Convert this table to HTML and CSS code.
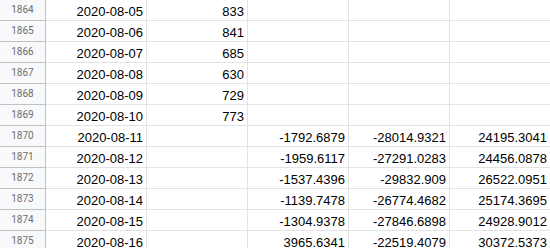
FILE: index.html
```html
<!DOCTYPE html>
<html lang="en">

<head>
    <meta charset="UTF-8">
    <meta name="viewport" content="width=device-width, initial-scale=1.0">
    <title>Sheet</title>

    <link rel="stylesheet" href="styles.css">
</head>

<body>

    <div id="sheet">
        <div class="row"><div class="rh">1864</div><div class="cell">2020-08-05</div><div class="cell">833</div><div class="cell"></div><div class="cell"></div><div class="cell"></div></div>
        <div class="row"><div class="rh">1865</div><div class="cell">2020-08-06</div><div class="cell">841</div><div class="cell"></div><div class="cell"></div><div class="cell"></div></div>
        <div class="row"><div class="rh">1866</div><div class="cell">2020-08-07</div><div class="cell">685</div><div class="cell"></div><div class="cell"></div><div class="cell"></div></div>
        <div class="row"><div class="rh">1867</div><div class="cell">2020-08-08</div><div class="cell">630</div><div class="cell"></div><div class="cell"></div><div class="cell"></div></div>
        <div class="row"><div class="rh">1868</div><div class="cell">2020-08-09</div><div class="cell">729</div><div class="cell"></div><div class="cell"></div><div class="cell"></div></div>
        <div class="row"><div class="rh">1869</div><div class="cell">2020-08-10</div><div class="cell">773</div><div class="cell"></div><div class="cell"></div><div class="cell"></div></div>
        <div class="row"><div class="rh">1870</div><div class="cell">2020-08-11</div><div class="cell"></div><div class="cell">-1792.6879</div><div class="cell">-28014.9321</div><div class="cell">24195.3041</div></div>
        <div class="row"><div class="rh">1871</div><div class="cell">2020-08-12</div><div class="cell"></div><div class="cell">-1959.6117</div><div class="cell">-27291.0283</div><div class="cell">24456.0878</div></div>
        <div class="row"><div class="rh">1872</div><div class="cell">2020-08-13</div><div class="cell"></div><div class="cell">-1537.4396</div><div class="cell">-29832.909</div><div class="cell">26522.0951</div></div>
        <div class="row"><div class="rh">1873</div><div class="cell">2020-08-14</div><div class="cell"></div><div class="cell">-1139.7478</div><div class="cell">-26774.4682</div><div class="cell">25174.3695</div></div>
        <div class="row"><div class="rh">1874</div><div class="cell">2020-08-15</div><div class="cell"></div><div class="cell">-1304.9378</div><div class="cell">-27846.6898</div><div class="cell">24928.9012</div></div>
        <div class="row"><div class="rh">1875</div><div class="cell">2020-08-16</div><div class="cell"></div><div class="cell">3965.6341</div><div class="cell">-22519.4079</div><div class="cell">30372.5373</div></div>
    </div>

</body>

</html>
```

FILE: styles.css
```css
body {
    margin: 0;
    background: #ffffff;
    overflow: hidden;
}

#sheet {
    width: 560px;
}

.row {
    display: flex;
    height: 21px;
}

.rh {
    box-sizing: border-box;
    width: 46px;
    height: 21px;
    flex: none;
    background: #f8f9fa;
    border-right: 1px solid #c0c0c0;
    border-bottom: 1px solid #c0c0c0;
    color: #6f6f6f;
    font-family: Roboto, "Liberation Sans", sans-serif;
    font-size: 10px;
    line-height: 20px;
    text-align: center;
}

.cell {
    box-sizing: border-box;
    width: 101px;
    height: 21px;
    flex: none;
    border-right: 1px solid #e2e3e3;
    border-bottom: 1px solid #e2e3e3;
    padding: 3px 3px 0 0;
    color: #000000;
    font-family: "Liberation Sans", Arial, sans-serif;
    font-size: 13px;
    line-height: 17px;
    text-align: right;
    white-space: nowrap;
    overflow: hidden;
}
```
